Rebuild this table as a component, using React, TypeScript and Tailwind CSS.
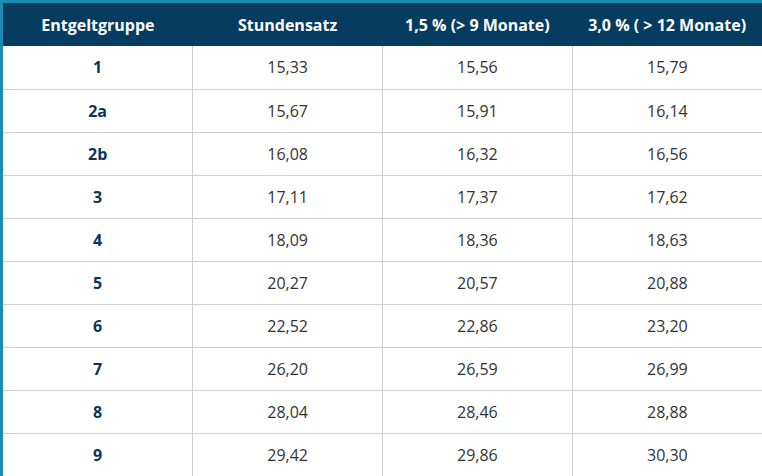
const rows = [
  ["1", "15,33", "15,56", "15,79"],
  ["2a", "15,67", "15,91", "16,14"],
  ["2b", "16,08", "16,32", "16,56"],
  ["3", "17,11", "17,37", "17,62"],
  ["4", "18,09", "18,36", "18,63"],
  ["5", "20,27", "20,57", "20,88"],
  ["6", "22,52", "22,86", "23,20"],
  ["7", "26,20", "26,59", "26,99"],
  ["8", "28,04", "28,46", "28,88"],
  ["9", "29,42", "29,86", "30,30"],
];

const headers = ["Entgeltgruppe", "Stundensatz", "1,5 % (> 9 Monate)", "3,0 % ( > 12 Monate)"];

export default function App() {
  return (
    <div className="w-[762px] h-[476px] overflow-hidden bg-white font-['Open_Sans',sans-serif]">
      <div className="border-t-[3px] border-l-[3px] border-[#1b8cb3]">
        <table className="w-full table-fixed border-collapse">
          <thead>
            <tr className="bg-[#053c60] h-[43px]">
              {headers.map((h) => (
                <th key={h} className="text-[16px] font-bold text-white text-center align-middle">
                  {h}
                </th>
              ))}
            </tr>
          </thead>
          <tbody>
            {rows.map((r) => (
              <tr key={r[0]} className="h-[43px]">
                {r.map((c, i) => (
                  <td
                    key={i}
                    className={
                      "border border-[#cfcfcf] border-t-0 text-center align-middle text-[16px] " +
                      (i === 0 ? "font-bold text-[#0b3552] border-l-0" : "text-[#333333]") +
                      (i === 3 ? " border-r-0" : "")
                    }
                  >
                    {c}
                  </td>
                ))}
              </tr>
            ))}
          </tbody>
        </table>
      </div>
    </div>
  );
}
